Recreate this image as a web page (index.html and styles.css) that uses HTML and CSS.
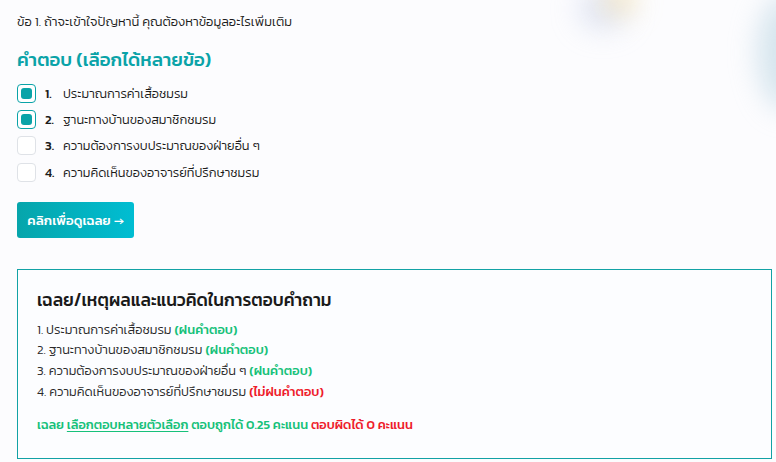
FILE: index.html
```html
<!DOCTYPE html>
<html lang="th">
<head>
<meta charset="utf-8">
<title>คำถาม</title>
<link rel="stylesheet" href="styles.css">
</head>
<body>
<div class="page">
  <div class="bg-blob blob-a"></div>
  <div class="bg-blob blob-b"></div>
  <div class="bg-blob blob-c"></div>
  <main class="content">
    <p class="question">ข้อ 1. ถ้าจะเข้าใจปัญหานี้ คุณต้องหาข้อมูลอะไรเพิ่มเติม</p>
    <h2 class="answer-title">คำตอบ (เลือกได้หลายข้อ)</h2>
    <ul class="choices">
      <li class="choice"><span class="box checked"></span><b class="num">1.</b><span>ประมาณการค่าเสื้อชมรม</span></li>
      <li class="choice"><span class="box checked"></span><b class="num">2.</b><span>ฐานะทางบ้านของสมาชิกชมรม</span></li>
      <li class="choice"><span class="box"></span><b class="num">3.</b><span>ความต้องการงบประมาณของฝ่ายอื่น ๆ</span></li>
      <li class="choice"><span class="box"></span><b class="num">4.</b><span>ความคิดเห็นของอาจารย์ที่ปรึกษาชมรม</span></li>
    </ul>
    <button class="reveal">คลิกเพื่อดูเฉลย →</button>
    <section class="solution">
      <h3 class="solution-title">เฉลย/เหตุผลและแนวคิดในการตอบคำถาม</h3>
      <ol class="sol-list">
        <li>1. ประมาณการค่าเสื้อชมรม <b class="ok">(ฝนคำตอบ)</b></li>
        <li>2. ฐานะทางบ้านของสมาชิกชมรม <b class="ok">(ฝนคำตอบ)</b></li>
        <li>3. ความต้องการงบประมาณของฝ่ายอื่น ๆ <b class="ok">(ฝนคำตอบ)</b></li>
        <li>4. ความคิดเห็นของอาจารย์ที่ปรึกษาชมรม <b class="bad">(ไม่ฝนคำตอบ)</b></li>
      </ol>
      <p class="score"><span class="ok">เฉลย <u>เลือกตอบหลายตัวเลือก</u> ตอบถูกได้ 0.25 คะแนน</span> <span class="bad">ตอบผิดได้ 0 คะแนน</span></p>
    </section>
  </main>
</div>
</body>
</html>
```

FILE: styles.css
```css
* { box-sizing: border-box; }
html, body { margin: 0; padding: 0; }
body {
  background: #fcfcfe;
  font-family: "Kanit", "Noto Sans Thai", sans-serif;
  font-weight: 300;
  color: #1c1c1c;
  overflow: hidden;
}
.page {
  position: relative;
  width: 776px;
  height: 462px;
  overflow: hidden;
}
.bg-blob {
  position: absolute;
  border-radius: 50%;
  filter: blur(14px);
}
.blob-a { left: 578px; top: -12px; width: 50px; height: 42px; background: rgba(175,188,225,0.35); }
.blob-b { left: 605px; top: -16px; width: 30px; height: 30px; background: rgba(255,222,130,0.5); }
.blob-c { left: 758px; top: -5px; width: 60px; height: 115px; background: rgba(165,200,218,0.45); }
.content {
  position: relative;
  padding: 12px 5px 0 17px;
}
.question {
  margin: 0;
  font-size: 13px;
  line-height: 20px;
  color: #1c1c1c;
}
.answer-title {
  margin: 12px 0 0;
  font-size: 18.8px;
  line-height: 30px;
  font-weight: 500;
  color: #0aa3a8;
}
.choices {
  list-style: none;
  margin: 6px 0 0;
  padding: 0;
}
.choice {
  display: flex;
  align-items: center;
  height: 26.4px;
  font-size: 12.8px;
  color: #1c1c1c;
}
.box {
  width: 19px;
  height: 19px;
  border: 1px solid #dfe2e7;
  border-radius: 4px;
  background: #fff;
  display: flex;
  align-items: center;
  justify-content: center;
  margin-right: 9px;
}
.box.checked { border-color: #0aa3a8; }
.box.checked::after {
  content: "";
  width: 11px;
  height: 11px;
  border-radius: 3px;
  background: #0aa3a8;
}
.num { width: 18px; font-weight: 500; }
.reveal {
  display: block;
  margin-top: 16.5px;
  width: 117px;
  height: 36px;
  border: none;
  border-radius: 3px;
  background: linear-gradient(90deg, #06a5ab, #00bdd2);
  color: #fff;
  font-family: inherit;
  font-size: 13.4px;
  font-weight: 500;
  padding: 0;
}
.solution {
  margin-top: 31px;
  width: 755px;
  height: 190px;
  border: 1px solid #12a2a5;
  background: #fcfdff;
  padding: 15px 19px;
}
.solution-title {
  margin: 0;
  font-size: 17.4px;
  line-height: 30px;
  font-weight: 500;
  color: #1a1a1a;
}
.sol-list {
  list-style: none;
  margin: 4.5px 0 0;
  padding: 0;
  font-size: 12.85px;
  line-height: 20.7px;
  color: #2a2a2a;
}
.sol-list b { font-weight: 500; }
.ok { color: #17c17a; }
.bad { color: #ee1c2b; }
.score {
  margin: 12.5px 0 0;
  font-size: 12.8px;
  line-height: 20px;
  font-weight: 500;
}
.score u { text-decoration-thickness: 1px; text-underline-offset: 2px; }
```
